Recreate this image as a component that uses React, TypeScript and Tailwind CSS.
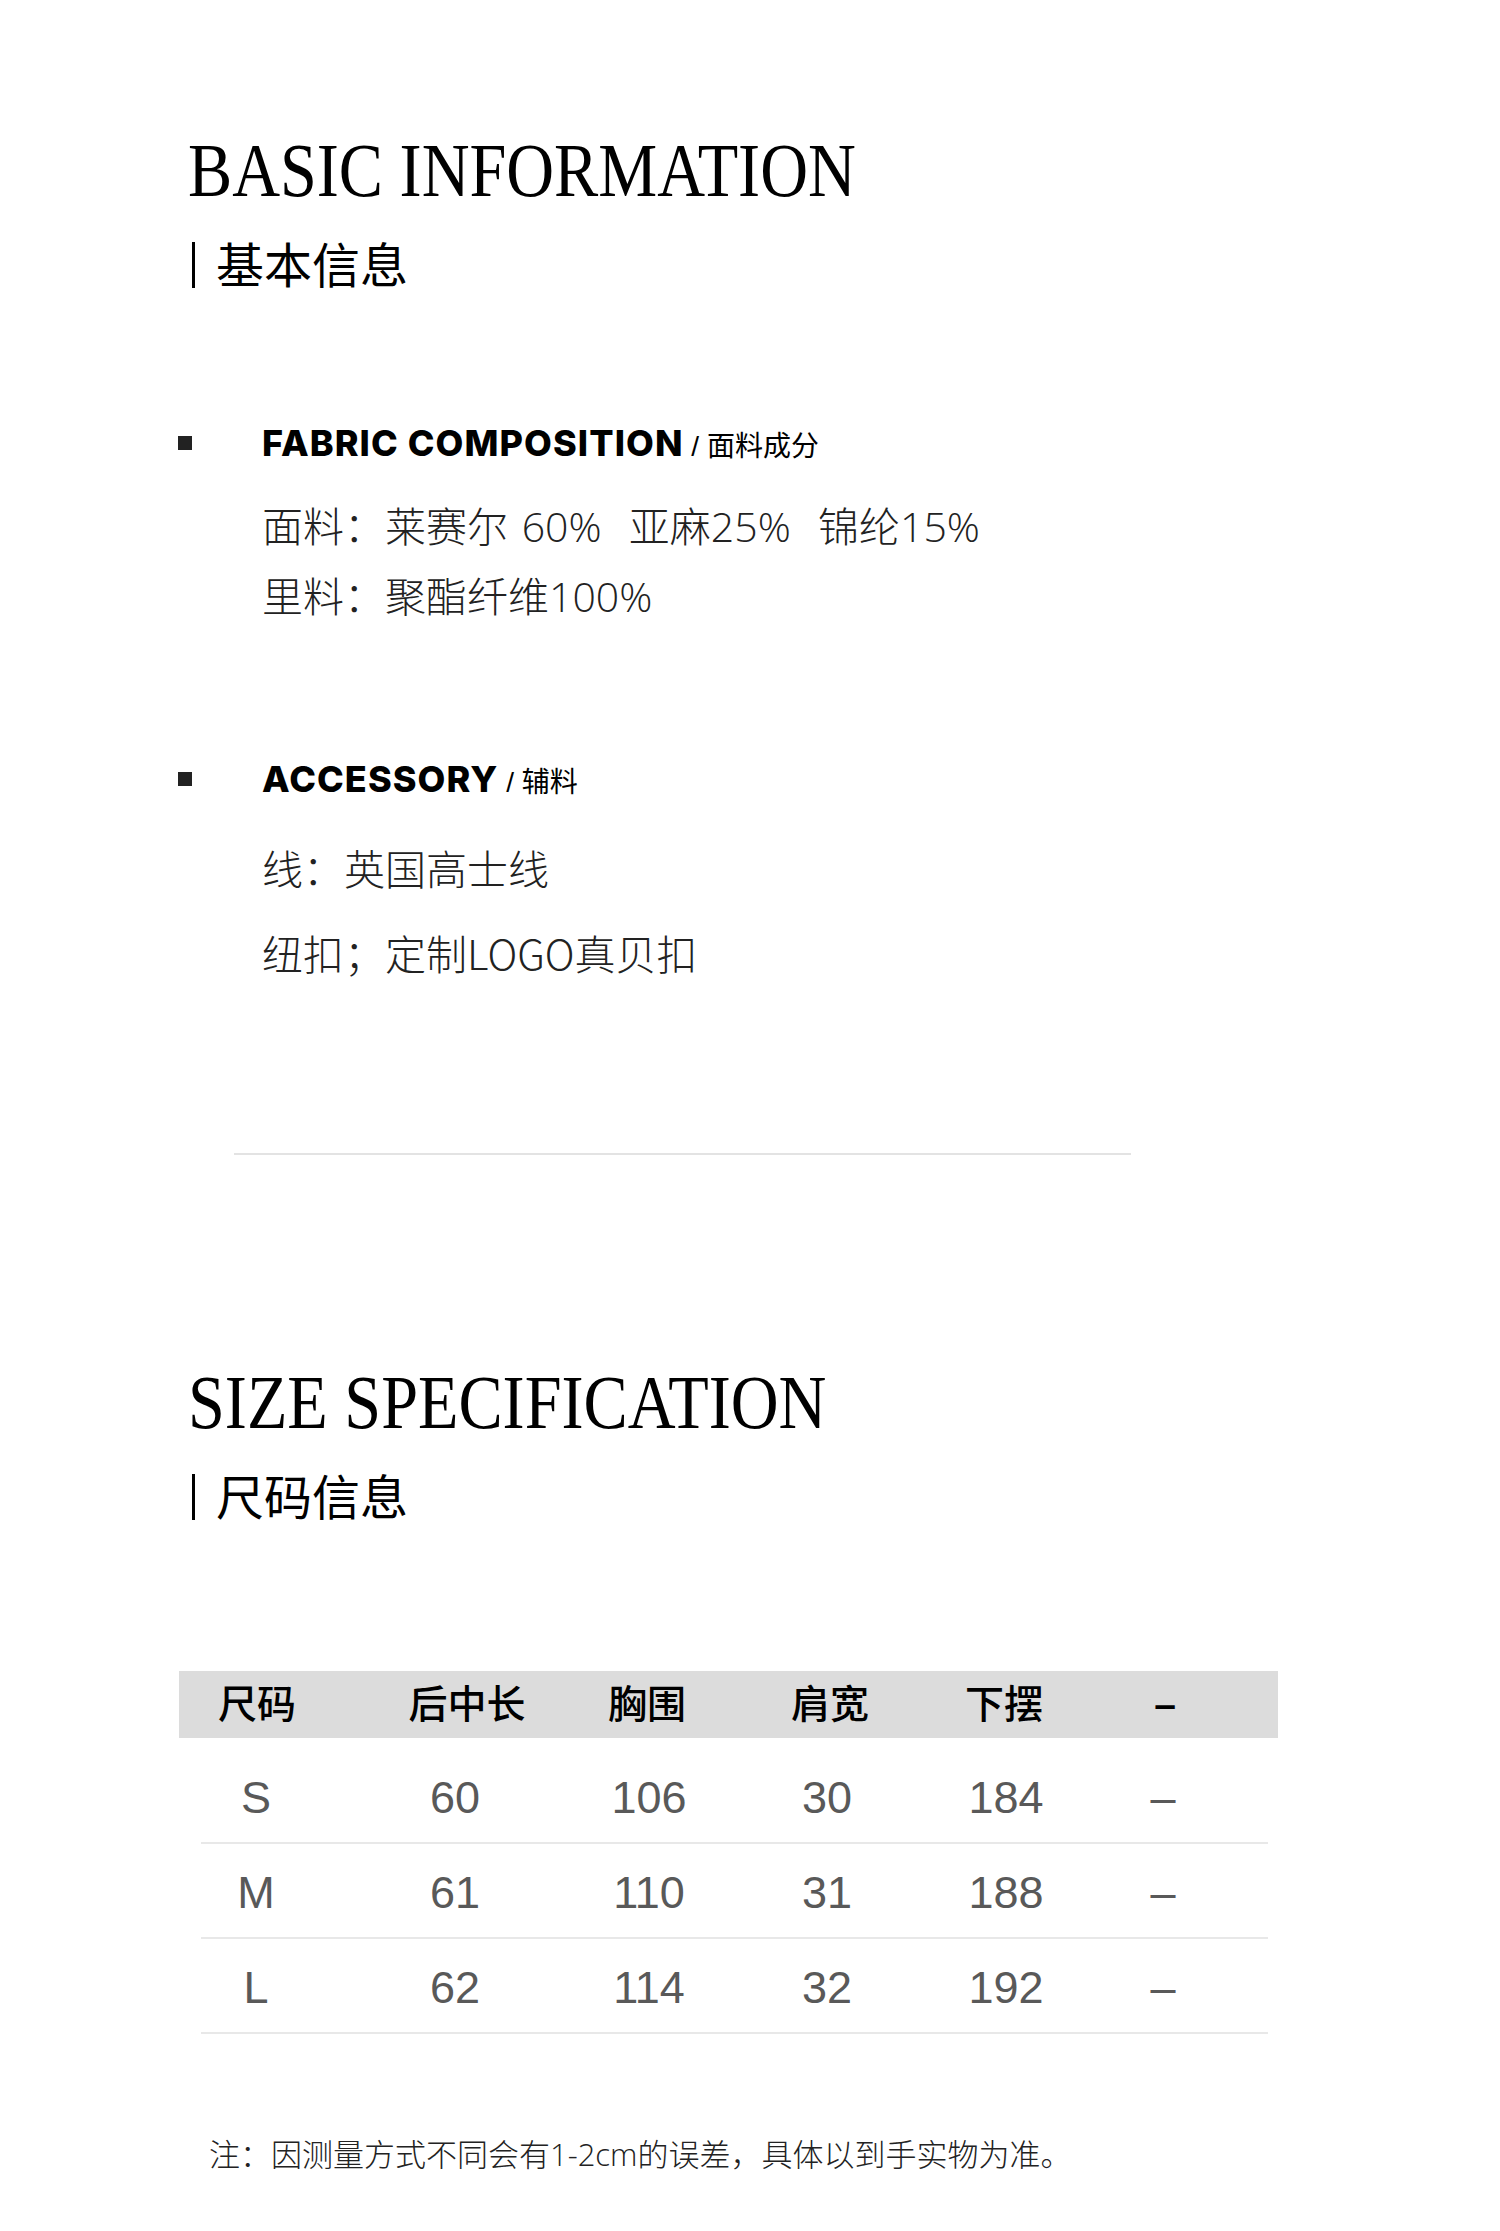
export default function App() {
  const headers = ["尺码", "后中长", "胸围", "肩宽", "下摆", "–"];
  const rows = [
    ["S", "60", "106", "30", "184", "–"],
    ["M", "61", "110", "31", "188", "–"],
    ["L", "62", "114", "32", "192", "–"],
  ];
  const headCols = "grid grid-cols-[156px_264px_96px_270px_76px_248px]";
  const bodyCols = "grid grid-cols-[154px_244px_144px_212px_146px_168px]";

  return (
    <div className="w-[1500px] h-[2231px] bg-white overflow-hidden text-black">
      {/* BASIC INFORMATION */}
      <div className="pt-[132px] ml-[188px]">
        <h1 className="font-['Liberation_Serif',serif] text-[77px] leading-none h-[77px] whitespace-nowrap">
          <span className="inline-block origin-left scale-x-[0.86]">BASIC INFORMATION</span>
        </h1>
        <div className="mt-[29px] flex items-start h-[48px]">
          <div className="ml-[4px] mt-[4px] w-[3px] h-[46px] bg-black" />
          <div className="ml-[21px] font-['Noto_Sans_CJK_SC',sans-serif] text-[48px] leading-none">基本信息</div>
        </div>
      </div>

      {/* FABRIC */}
      <section className="mt-[139px] ml-[178px]">
        <div className="flex items-start h-[36px]">
          <div className="mt-[11px] w-[14px] h-[14px] bg-[#222]" />
          <div className="ml-[70px] leading-none whitespace-nowrap h-[36px]">
            <span className="font-['Inter',sans-serif] font-extrabold text-[36px] tracking-[0.03em]">FABRIC COMPOSITION</span>
            <span className="font-['Liberation_Sans','Noto_Sans_CJK_SC',sans-serif] text-[28px]"> / 面料成分</span>
          </div>
        </div>
        <div className="mt-[30px] ml-[84px] font-['Open_Sans','Noto_Sans_CJK_SC',sans-serif] font-light text-[41px] leading-[70px] whitespace-pre [word-spacing:3px] text-[#222]">
          <p>面料：莱赛尔 60%  亚麻25%  锦纶15%</p>
          <p>里料：聚酯纤维100%</p>
        </div>
      </section>

      {/* ACCESSORY */}
      <section className="mt-[130px] ml-[178px]">
        <div className="flex items-start h-[36px]">
          <div className="mt-[11px] w-[14px] h-[14px] bg-[#222]" />
          <div className="ml-[70px] leading-none whitespace-nowrap h-[36px]">
            <span className="font-['Inter',sans-serif] font-extrabold text-[36px] tracking-[0.03em]">ACCESSORY</span>
            <span className="font-['Liberation_Sans','Noto_Sans_CJK_SC',sans-serif] text-[28px]"> / 辅料</span>
          </div>
        </div>
        <div className="mt-[28px] ml-[84px] font-['Noto_Sans_CJK_SC',sans-serif] font-light text-[41px] leading-[85px] whitespace-pre text-[#222]">
          <p>线：英国高士线</p>
          <p>纽扣；定制LOGO真贝扣</p>
        </div>
      </section>

      {/* Divider */}
      <div className="mt-[158px] ml-[234px] w-[897px] h-[2px] bg-[#e3e3e3]" />

      {/* SIZE SPECIFICATION */}
      <div className="mt-[209px] ml-[188px]">
        <h2 className="font-['Liberation_Serif',serif] text-[77px] leading-none h-[77px] whitespace-nowrap">
          <span className="inline-block origin-left scale-x-[0.86]">SIZE SPECIFICATION</span>
        </h2>
        <div className="mt-[29px] flex items-start h-[48px]">
          <div className="ml-[4px] mt-[4px] w-[3px] h-[46px] bg-black" />
          <div className="ml-[21px] font-['Noto_Sans_CJK_SC',sans-serif] text-[48px] leading-none">尺码信息</div>
        </div>
      </div>

      {/* Table */}
      <div className="mt-[153px] ml-[179px] w-[1099px]">
        <div className={`${headCols} h-[67px] items-center bg-[#dcdcdc] font-['Liberation_Sans','Noto_Sans_CJK_SC',sans-serif] text-[39px] font-medium leading-none text-black`}>
          {headers.map((h, i) => (
            <div key={i} className={i === 5 ? "text-center whitespace-nowrap font-bold" : "text-center whitespace-nowrap"}>{h}</div>
          ))}
        </div>
        {rows.map((r, ri) => (
          <div key={ri}>
            <div className={`${bodyCols} items-center ${ri === 0 ? "h-[104px] pt-[14px]" : "h-[93px] pt-[4px]"} font-['Liberation_Sans',sans-serif] text-[45px] leading-none text-[#595959]`}>
              {r.map((c, ci) => (
                <div key={ci} className="text-center whitespace-nowrap">{c}</div>
              ))}
            </div>
            <div className="ml-[22px] w-[1067px] h-[2px] bg-[#e8e8e8]" />
          </div>
        ))}
      </div>

      {/* Note */}
      <p className="mt-[105px] ml-[209px] font-['Open_Sans','Noto_Sans_CJK_SC',sans-serif] font-light text-[31px] leading-[31px] text-[#222] whitespace-nowrap">
        注：因测量方式不同会有1-2cm的误差，具体以到手实物为准。
      </p>
    </div>
  );
}
